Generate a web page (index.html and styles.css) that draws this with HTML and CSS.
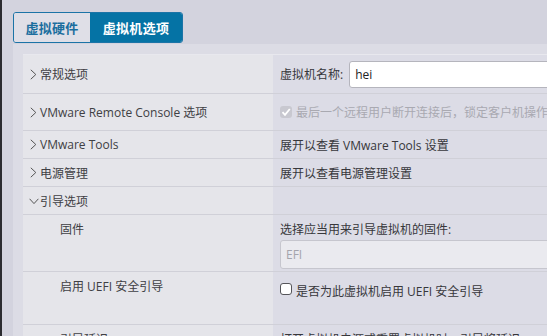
FILE: index.html
```html
<!DOCTYPE html>
<html lang="zh-CN">
<head>
    <meta charset="UTF-8">
    <title>虚拟机选项</title>
    <link rel="stylesheet" href="styles.css">
</head>
<body>
    <div class="page">
        <div class="tabs">
            <div class="tab">虚拟硬件</div>
            <div class="tab active">虚拟机选项</div>
        </div>

        <div class="panel">
            <div class="table">
                <div class="row r1">
                    <div class="label"><span class="chev"><svg width="7" height="11" viewBox="0 0 7 11"><polyline points="0.8,0.8 5.8,5.5 0.8,10.2" fill="none" stroke="#555" stroke-width="1"/></svg></span>常规选项</div>
                    <div class="value">
                        <span class="field-name">虚拟机名称:</span>
                        <input class="text-input" type="text" value="hei">
                    </div>
                </div>
                <div class="row r2">
                    <div class="label"><span class="chev"><svg width="7" height="11" viewBox="0 0 7 11"><polyline points="0.8,0.8 5.8,5.5 0.8,10.2" fill="none" stroke="#555" stroke-width="1"/></svg></span>VMware Remote Console 选项</div>
                    <div class="value muted">
                        <span class="check checked"><svg width="12" height="12" viewBox="0 0 12 12"><polyline points="2.5,6.2 5,8.8 9.8,3" fill="none" stroke="#fff" stroke-width="1.8"/></svg></span>
                        <span class="nowrap">最后一个远程用户断开连接后，锁定客户机操作系统</span>
                    </div>
                </div>
                <div class="row r3">
                    <div class="label"><span class="chev"><svg width="7" height="11" viewBox="0 0 7 11"><polyline points="0.8,0.8 5.8,5.5 0.8,10.2" fill="none" stroke="#555" stroke-width="1"/></svg></span>VMware Tools</div>
                    <div class="value">展开以查看 VMware Tools 设置</div>
                </div>
                <div class="row r3">
                    <div class="label"><span class="chev"><svg width="7" height="11" viewBox="0 0 7 11"><polyline points="0.8,0.8 5.8,5.5 0.8,10.2" fill="none" stroke="#555" stroke-width="1"/></svg></span>电源管理</div>
                    <div class="value">展开以查看电源管理设置</div>
                </div>
                <div class="row r3">
                    <div class="label"><span class="chev down"><svg width="10" height="7" viewBox="0 0 10 7"><polyline points="0.6,0.8 5,5.6 9.4,0.8" fill="none" stroke="#555" stroke-width="1"/></svg></span>引导选项</div>
                    <div class="value"></div>
                </div>
                <div class="row r6">
                    <div class="label sub">固件</div>
                    <div class="value stack">
                        <div>选择应当用来引导虚拟机的固件:</div>
                        <div class="select">EFI</div>
                    </div>
                </div>
                <div class="row r7">
                    <div class="label sub">启用 UEFI 安全引导</div>
                    <div class="value top">
                        <span class="check"></span>
                        <span>是否为此虚拟机启用 UEFI 安全引导</span>
                    </div>
                </div>
                <div class="row r8">
                    <div class="label sub">引导延迟</div>
                    <div class="value top">打开虚拟机电源或重置虚拟机时，引导将延迟</div>
                </div>
            </div>
        </div>
    </div>
</body>
</html>
```

FILE: styles.css
```css
html, body {
    margin: 0;
    height: 100%;
    overflow: hidden;
}
body {
    background-color: #d3d3de;
    border-left: 2px solid #2b2b30;
    font-family: "Open Sans", "Noto Sans CJK SC", sans-serif;
    font-size: 12px;
    color: #3a3a3e;
}
.page {
    margin-left: 11px;
    width: 800px;
}
.tabs {
    display: inline-flex;
    margin-top: 12px;
    border: 1px solid #1b74a7;
    border-radius: 3px;
    overflow: hidden;
    height: 29px;
}
.tab {
    width: 76px;
    display: flex;
    align-items: center;
    justify-content: center;
    font-size: 13px;
    font-weight: bold;
    letter-spacing: 0.3px;
    color: #1b6e9e;
    background-color: #dfdfe7;
}
.tab.active {
    width: 92px;
    background-color: #0573a5;
    color: #fff;
}
.panel {
    margin-top: 1px;
    background-color: #dcdce5;
    padding: 10px 0 0 10px;
    height: 400px;
}
.table {
    border-top: 1px solid #e8e8ee;
}
.row {
    display: grid;
    grid-template-columns: 250px 1fr;
    border-bottom: 1px solid #d0d0d8;
}
.label {
    background-color: #e5e5ea;
    display: flex;
    align-items: center;
    padding-left: 4px;
    color: #404044;
}
.label.sub {
    align-items: flex-start;
    padding-left: 37px;
    padding-top: 5px;
}
.chev {
    width: 13px;
    display: inline-flex;
    justify-content: center;
}
.chev.down {
    padding-top: 1px;
}
.value {
    background-color: #dcdce6;
    display: flex;
    align-items: center;
    padding-left: 7px;
    color: #37373b;
}
.value.top {
    align-items: flex-start;
}
.value.stack {
    flex-direction: column;
    align-items: stretch;
    padding-top: 5px;
}
.muted {
    color: #a9a9b1;
}
.nowrap {
    white-space: nowrap;
}
.r1 { height: 38px; }
.r2 { height: 36px; }
.r3 { height: 27px; }
.r6 { height: 56px; }
.r7 { height: 52px; }
.r8 { height: 40px; }
.r7 .value {
    padding-top: 10px;
}
.r8 .value {
    padding-top: 5px;
}
.field-name {
    margin-right: 6px;
}
.text-input {
    flex: 1;
    box-sizing: border-box;
    height: 27px;
    border: 1px solid #b5b5bd;
    border-radius: 3px;
    background: #fff;
    font: inherit;
    color: #222;
    padding: 0 5px;
}
.check {
    width: 12px;
    height: 12px;
    box-sizing: border-box;
    border: 1px solid #55555a;
    border-radius: 3px;
    background: #fff;
    margin-right: 4px;
    display: inline-flex;
    flex-shrink: 0;
}
.value.top .check {
    margin-top: 1px;
}
.check.checked {
    border: none;
    background: #c8c8d0;
}
.select {
    margin-top: 2px;
    height: 29px;
    box-sizing: border-box;
    border: 1px solid #c6c6ce;
    border-radius: 3px;
    background-color: #eaeaef;
    color: #a4a4ac;
    display: flex;
    align-items: center;
    padding-left: 5px;
}
```
